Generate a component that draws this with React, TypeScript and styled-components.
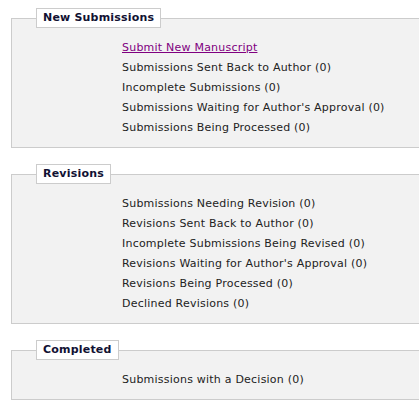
import React from 'react'
import styled, { createGlobalStyle } from 'styled-components'

const GlobalStyle = createGlobalStyle`
  html, body {
    margin: 0;
    background: #ffffff;
    overflow: hidden;
  }
  body {
    padding: 8px 0 0 8px;
    font-family: 'DejaVu Sans', Verdana, sans-serif;
    font-size: 11px;
    color: #222222;
  }
`

type Section = {
  title: string
  items: { label: string; link?: boolean }[]
}

const sections: Section[] = [
  {
    title: 'New Submissions',
    items: [
      { label: 'Submit New Manuscript', link: true },
      { label: 'Submissions Sent Back to Author (0)' },
      { label: 'Incomplete Submissions (0)' },
      { label: "Submissions Waiting for Author's Approval (0)" },
      { label: 'Submissions Being Processed (0)' },
    ],
  },
  {
    title: 'Revisions',
    items: [
      { label: 'Submissions Needing Revision (0)' },
      { label: 'Revisions Sent Back to Author (0)' },
      { label: 'Incomplete Submissions Being Revised (0)' },
      { label: "Revisions Waiting for Author's Approval (0)" },
      { label: 'Revisions Being Processed (0)' },
      { label: 'Declined Revisions (0)' },
    ],
  },
  {
    title: 'Completed',
    items: [{ label: 'Submissions with a Decision (0)' }],
  },
]

const Page = styled.div`
  display: flex;
  flex-direction: column;
  gap: 16px;
  width: 440px;
`

const Box = styled.fieldset`
  margin: 0 0 0 3px;
  padding: 0 0 0 24px;
  border: 1px solid #cccccc;
  background: #f2f2f2;
  min-width: 0;
`

const Legend = styled.legend`
  padding: 1px 6px 2px 6px;
  border: 1px solid #cccccc;
  background: #ffffff;
  font-weight: bold;
  font-size: 11px;
  line-height: 15px;
  letter-spacing: 0.2px;
  color: #111133;
`

const List = styled.ul`
  list-style: none;
  margin: 10px 0 9px 0;
  padding: 0 0 0 86px;
`

const Item = styled.li`
  line-height: 20px;
  height: 20px;
  white-space: nowrap;
  letter-spacing: 0.22px;
`

const Link = styled.a`
  color: #800080;
  text-decoration: underline;
  cursor: pointer;
`

export default function App() {
  return (
    <>
      <GlobalStyle />
      <Page>
        {sections.map((s) => (
          <Box key={s.title}>
            <Legend>{s.title}</Legend>
            <List>
              {s.items.map((it) => (
                <Item key={it.label}>
                  {it.link ? <Link href="#">{it.label}</Link> : it.label}
                </Item>
              ))}
            </List>
          </Box>
        ))}
      </Page>
    </>
  )
}
